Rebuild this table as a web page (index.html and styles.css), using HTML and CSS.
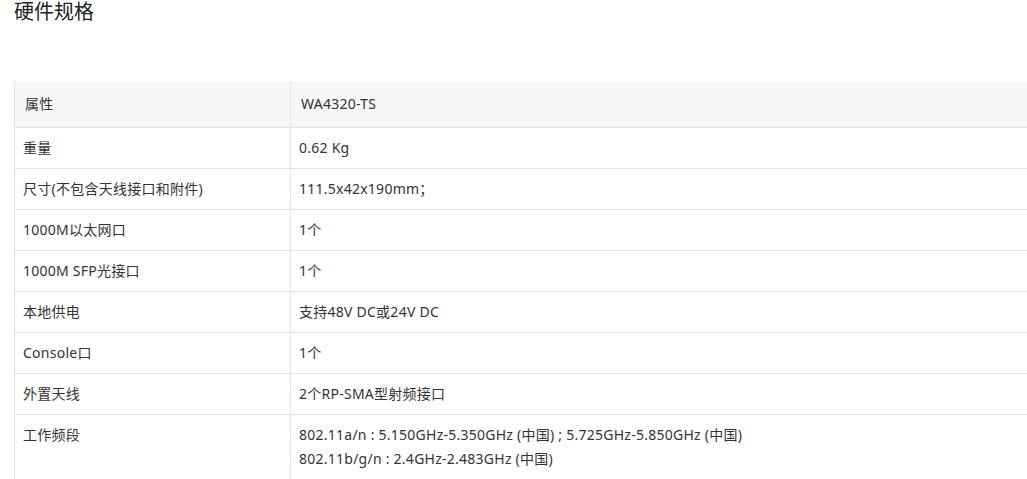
FILE: index.html
```html
<!DOCTYPE html>
<html lang="zh-CN">
<head>
<meta charset="utf-8">
<title>硬件规格</title>
<link rel="stylesheet" href="styles.css">
</head>
<body>
<h2 class="title">硬件规格</h2>
<table class="spec">
  <thead>
    <tr><th class="key">属性</th><th>WA4320-TS</th></tr>
  </thead>
  <tbody>
    <tr><td class="key">重量</td><td>0.62 Kg</td></tr>
    <tr><td class="key">尺寸(不包含天线接口和附件)</td><td>111.5x42x190mm；</td></tr>
    <tr><td class="key">1000M以太网口</td><td>1个</td></tr>
    <tr><td class="key">1000M SFP光接口</td><td>1个</td></tr>
    <tr><td class="key">本地供电</td><td>支持48V DC或24V DC</td></tr>
    <tr><td class="key">Console口</td><td>1个</td></tr>
    <tr><td class="key">外置天线</td><td>2个RP-SMA型射频接口</td></tr>
    <tr><td class="key">工作频段</td><td>802.11a/n : 5.150GHz-5.350GHz (中国) ; 5.725GHz-5.850GHz (中国)<br>802.11b/g/n : 2.4GHz-2.483GHz (中国)</td></tr>
  </tbody>
</table>
</body>
</html>
```
FILE: styles.css
```css
html, body {
  margin: 0;
  padding: 0;
  background: #fff;
  overflow: hidden;
}
body {
  padding-left: 14px;
  font-family: "Noto Sans", "Noto Sans CJK SC", sans-serif;
  color: #333;
  font-size: 14px;
}
.title {
  margin: 0 0 57px;
  font-size: 20px;
  line-height: 24px;
  font-weight: normal;
  color: #222;
}
.spec {
  border-collapse: collapse;
  width: 1100px;
  border-left: 1px solid #e3e3e3;
  letter-spacing: 0.25px;
}
.spec th, .spec td {
  text-align: left;
  font-weight: normal;
  line-height: 24px;
  vertical-align: top;
  border-bottom: 1px solid #e3e3e3;
}
.spec th {
  background: #f7f7f7;
  padding: 11px 10px;
}
.spec td {
  padding: 8px 8px;
}
.spec th.key {
  width: 255px;
  border-right: 1px solid #e3e3e3;
}
.spec td.key {
  width: 259px;
  border-right: 1px solid #e3e3e3;
}
```
